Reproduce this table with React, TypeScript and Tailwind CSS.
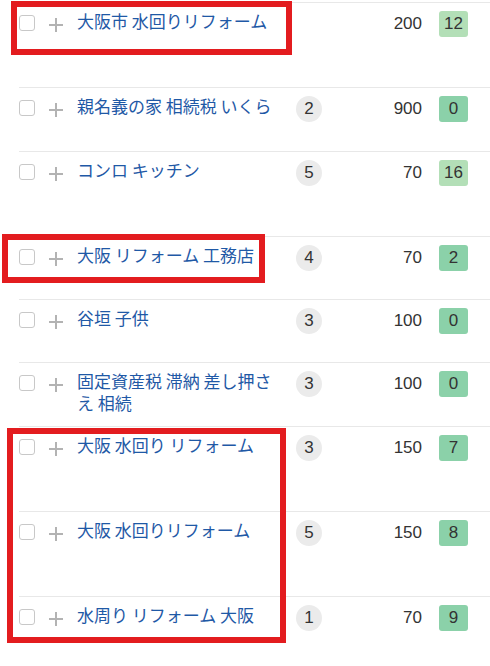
import React from "react";

type Row = {
  text: string;
  count?: number;
  volume: number;
  score: number;
  light?: boolean;
  h: string;
};

const rows: Row[] = [
  { text: "大阪市 水回りリフォーム", volume: 200, score: 12, light: true, h: "h-[85px]" },
  { text: "親名義の家 相続税 いくら", count: 2, volume: 900, score: 0, h: "h-[64px]" },
  { text: "コンロ キッチン", count: 5, volume: 70, score: 16, light: true, h: "h-[85px]" },
  { text: "大阪 リフォーム 工務店", count: 4, volume: 70, score: 2, h: "h-[63px]" },
  { text: "谷垣 子供", count: 3, volume: 100, score: 0, h: "h-[63px]" },
  { text: "固定資産税 滞納 差し押さえ 相続", count: 3, volume: 100, score: 0, h: "h-[64px]" },
  { text: "大阪 水回り リフォーム", count: 3, volume: 150, score: 7, h: "h-[85px]" },
  { text: "大阪 水回りリフォーム", count: 5, volume: 150, score: 8, h: "h-[85px]" },
  { text: "水周り リフォーム 大阪", count: 1, volume: 70, score: 9, h: "h-[85px]" },
];

function Plus() {
  return (
    <svg width="14" height="14" viewBox="0 0 14 14" className="block">
      <path d="M7 0V14M0 7H14" stroke="#b3b3b3" strokeWidth="2" />
    </svg>
  );
}

const num = { fontFamily: '"Liberation Sans", Arial, sans-serif' };

export default function App() {
  return (
    <div
      className="relative w-[490px] h-[666px] overflow-hidden bg-white"
      style={{ fontFamily: '"Noto Sans CJK JP", "Noto Sans", sans-serif' }}
    >
      <div className="h-[2px]" />
      {rows.map((r, i) => (
        <div
          key={i}
          className={`ml-[19px] border-t border-[#e8e8e8] flex items-start ${r.h}`}
        >
          <div className="w-4 h-4 mt-[12px] rounded-[3px] border border-[#c8c8c8] bg-white shrink-0" />
          <div className="ml-[14px] mt-[15px] shrink-0">
            <Plus />
          </div>
          <div className="ml-[14px] w-[205px] mt-[7px] text-[17px] leading-[22px] text-[#1f59a6] shrink-0">
            {r.text}
          </div>
          <div className="ml-[14px] w-[26px] mt-[8px] shrink-0">
            {r.count !== undefined && (
              <div
                className="w-[26px] h-[26px] rounded-full bg-[#ebebeb] flex items-center justify-center text-[17px] text-[#333]"
                style={num}
              >
                {r.count}
              </div>
            )}
          </div>
          <div
            className="w-[100px] mt-[10px] text-right text-[17px] leading-[22px] text-[#333] shrink-0"
            style={num}
          >
            {r.volume}
          </div>
          <div
            className={`ml-[17px] mt-[8px] w-[29px] h-[26px] rounded-[3px] flex items-center justify-center text-[17px] text-[#333] shrink-0 ${
              r.light ? "bg-[#b3dfb7]" : "bg-[#8bd1a9]"
            }`}
            style={num}
          >
            {r.score}
          </div>
        </div>
      ))}

      <div className="absolute left-[11px] top-[1px] w-[281px] h-[54px] border-[6px] border-[#e31c1f] pointer-events-none" />
      <div className="absolute left-[2px] top-[234px] w-[263px] h-[49px] border-[6px] border-[#e31c1f] pointer-events-none" />
      <div className="absolute left-[7px] top-[428px] w-[279px] h-[215px] border-[6px] border-[#e31c1f] pointer-events-none" />
    </div>
  );
}
